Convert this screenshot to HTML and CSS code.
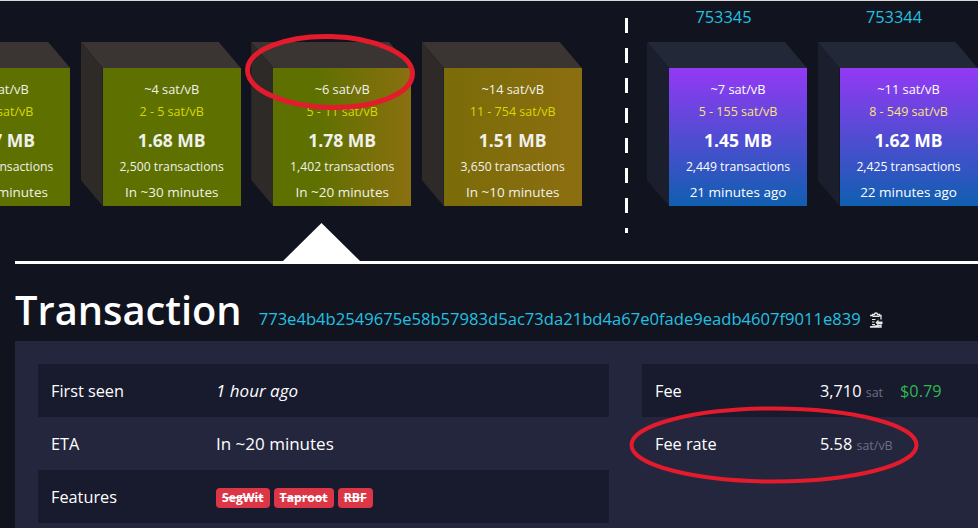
FILE: index.html
```html
<!DOCTYPE html>
<html lang="en">
<head>
<meta charset="utf-8">
<title>Transaction</title>
<link rel="stylesheet" href="styles.css">
</head>
<body>
<div class="page">
  <section class="chain">
    <div class="group mempool">
      <div class="block">
        <div class="height"></div>
        <div class="cube"><div class="front green">
          <div class="median">~3 sat/vB</div><div class="range">1 - 3 sat/vB</div><div class="size">1.67 MB</div><div class="txs">2,117 transactions</div><div class="time">In ~40 minutes</div>
        </div></div>
      </div>
      <div class="block">
        <div class="height"></div>
        <div class="cube"><div class="front green">
          <div class="median">~4 sat/vB</div><div class="range">2 - 5 sat/vB</div><div class="size">1.68 MB</div><div class="txs">2,500 transactions</div><div class="time">In ~30 minutes</div>
        </div></div>
      </div>
      <div class="block">
        <div class="height"></div>
        <div class="cube"><div class="front olive">
          <div class="median">~6 sat/vB</div><div class="range">5 - 11 sat/vB</div><div class="size">1.78 MB</div><div class="txs">1,402 transactions</div><div class="time">In ~20 minutes</div>
        </div></div>
      </div>
      <div class="block">
        <div class="height"></div>
        <div class="cube"><div class="front gold">
          <div class="median">~14 sat/vB</div><div class="range">11 - 754 sat/vB</div><div class="size">1.51 MB</div><div class="txs">3,650 transactions</div><div class="time">In ~10 minutes</div>
        </div></div>
      </div>
    </div>
    <div class="divider"></div>
    <div class="group mined">
      <div class="block">
        <div class="height">753345</div>
        <div class="cube"><div class="front purple">
          <div class="median">~7 sat/vB</div><div class="range">5 - 155 sat/vB</div><div class="size">1.45 MB</div><div class="txs">2,449 transactions</div><div class="time">21 minutes ago</div>
        </div></div>
      </div>
      <div class="block">
        <div class="height">753344</div>
        <div class="cube"><div class="front purple">
          <div class="median">~11 sat/vB</div><div class="range">8 - 549 sat/vB</div><div class="size">1.62 MB</div><div class="txs">2,425 transactions</div><div class="time">22 minutes ago</div>
        </div></div>
      </div>
    </div>
    <div class="arrow"></div>
  </section>
  <hr class="rule">
  <header class="title-row">
    <h1 class="title">Transaction</h1>
    <span class="hash">773e4b4b2549675e58b57983d5ac73da21bd4a67e0fade9eadb4607f9011e839</span>
    <svg class="copy" viewBox="0 0 14 16" width="14" height="16" aria-hidden="true">
      <path d="M1 3.500h2.500V2.500H5.500a1.500 1.500 0 0 1 3 0h2V3.500H12V7.500M12 13v2H1Z" fill="none" stroke="#e8e8e8" stroke-width="1.300"/>
      <path d="M3.500 3.600h7V5h-7Z" fill="#e8e8e8"/>
      <path d="M3 7.500h3.500M3 10h2.500M3 12.500h3" stroke="#e8e8e8" stroke-width="1.100"/>
      <path d="M6.500 10.500l3-3v2h4v2.500h-4v2Z" fill="#e8e8e8"/>
    </svg>
  </header>
  <section class="panel">
    <div class="table">
      <div class="row dark"><div class="label">First seen</div><div class="value seen"><i>1 hour ago</i></div></div>
      <div class="row"><div class="label">ETA</div><div class="value wide">In ~20 minutes</div></div>
      <div class="row dark"><div class="label">Features</div><div class="value badges"><span class="badge">SegWit</span><span class="badge">Taproot</span><span class="badge">RBF</span></div></div>
    </div>
    <div class="table">
      <div class="row dark"><div class="label">Fee</div><div class="value">3,710 <span class="unit">sat</span><span class="fiat">$0.79</span></div></div>
      <div class="row"><div class="label">Fee rate</div><div class="value">5.58 <span class="unit">sat/vB</span></div></div>
    </div>
  </section>
  <svg class="marks" viewBox="0 0 978 528" width="978" height="528" aria-hidden="true">
    <ellipse cx="330" cy="72" rx="82.500" ry="35.500" transform="rotate(1.500 330 72)" fill="none" stroke="#e31b2c" stroke-width="5"/>
    <ellipse cx="774" cy="445" rx="142.500" ry="36.500" fill="none" stroke="#e31b2c" stroke-width="4"/>
  </svg>
</div>
</body>
</html>
```
FILE: styles.css
```css
* { box-sizing: border-box; }
html, body { margin: 0; padding: 0; background: #11131f; }
body {
  font-family: "Open Sans", "Noto Sans", sans-serif;
  color: #fff;
  overflow: hidden;
}
.page {
  position: relative;
  width: 978px;
  height: 528px;
  overflow: hidden;
  border-top: 1px solid #d8d8d8;
}
.chain {
  position: relative;
  display: flex;
  height: 260px;
}
.group { display: flex; gap: 10.500px; flex: none; }
.mempool { margin-left: -89.800px; }
.mined { margin-left: 19.300px; }
.divider {
  flex: none;
  width: 3px;
  height: 215px;
  margin: 17px 0 0 43px;
  background: repeating-linear-gradient(to bottom, #fff 0 15px, transparent 15px 30px);
}
.block { flex: none; width: 160px; }
.height {
  height: 41px;
  padding: 5px 7px 0 0;
  text-align: center;
  font-size: 16.400px;
  line-height: 22px;
  color: #24c0e0;
}
.cube {
  position: relative;
  height: 164px;
  padding: 26px 0 0 22px;
}
.cube::before, .cube::after {
  content: "";
  position: absolute;
  left: 0;
  top: 0;
}
.cube::before {
  width: 160px;
  height: 26px;
  background: #3a3532;
  clip-path: polygon(0 0, 138px 0, 160px 26px, 22px 26px);
}
.cube::after {
  width: 22px;
  height: 164px;
  background: #2e2a28;
  clip-path: polygon(0 0, 22px 26px, 22px 164px, 0 138px);
}
.mined .cube::before { background: #232838; }
.mined .cube::after { background: #1b1e2c; }
.front {
  height: 138px;
  padding-top: 11px;
  text-align: center;
  font-size: 12.500px;
  color: #f1f1ec;
}
.green { background: #5d7000; }
.olive { background: linear-gradient(to right, #5e7000 30%, #8a7010); }
.gold { background: linear-gradient(to right, #7a6c08, #8c6e10); }
.purple { background: linear-gradient(to bottom, #9339f4, #105fb0); color: #fff; }
.median { line-height: 20px; height: 23px; font-size: 12.800px; }
.range { line-height: 20px; height: 22px; color: #d6d900; }
.purple .range { color: #ffe27a; }
.size { font-size: 17.500px; font-weight: 700; line-height: 24px; height: 29px; margin-top: 4px; }
.txs { line-height: 20px; height: 25px; font-size: 12.200px; }
.time { line-height: 20px; font-size: 13.500px; }
.arrow {
  position: absolute;
  left: 283px;
  top: 222px;
  width: 77px;
  height: 38px;
  background: #fff;
  clip-path: polygon(50% 0, 100% 100%, 0 100%);
}
.rule {
  margin: 0 0 0 15px;
  height: 3px;
  border: 0;
  background: #fff;
}
.title-row {
  display: flex;
  align-items: baseline;
  height: 77px;
  padding: 20px 0 0 15px;
}
.title {
  margin: 0;
  font-size: 39.800px;
  font-weight: 600;
  line-height: 52px;
}
.hash {
  margin-left: 17px;
  font-size: 16.600px;
  color: #24c0e0;
}
.copy { align-self: flex-end; margin: 0 0 13px 8px; flex: none; }
.panel {
  display: grid;
  grid-template-columns: 571px 571px;
  column-gap: 33px;
  margin-left: 15px;
  width: 1200px;
  height: 187px;
  padding: 23px;
  background: #24263e;
}
.row {
  display: flex;
  align-items: center;
  height: 53px;
  padding-left: 13px;
  font-size: 16.300px;
}
.dark { background: #181a2e; }
.label { width: 165px; flex: none; }
.value { display: flex; align-items: baseline; white-space: pre; }
.seen { font-size: 17px; }
.wide { font-size: 17px; }
.unit { color: #6c6f80; font-size: 12.500px; }
.fiat { color: #2fb84f; margin-left: 17px; }
.badges { gap: 4px; align-items: center; margin-top: 2px; }
.badge {
  background: #dc3545;
  border-radius: 4px;
  padding: 0 6px;
  height: 20px;
  line-height: 20px;
  font-size: 12.200px;
  font-weight: 700;
  text-decoration: line-through;
}
.marks {
  position: absolute;
  left: 0;
  top: -1px;
  pointer-events: none;
}
```
